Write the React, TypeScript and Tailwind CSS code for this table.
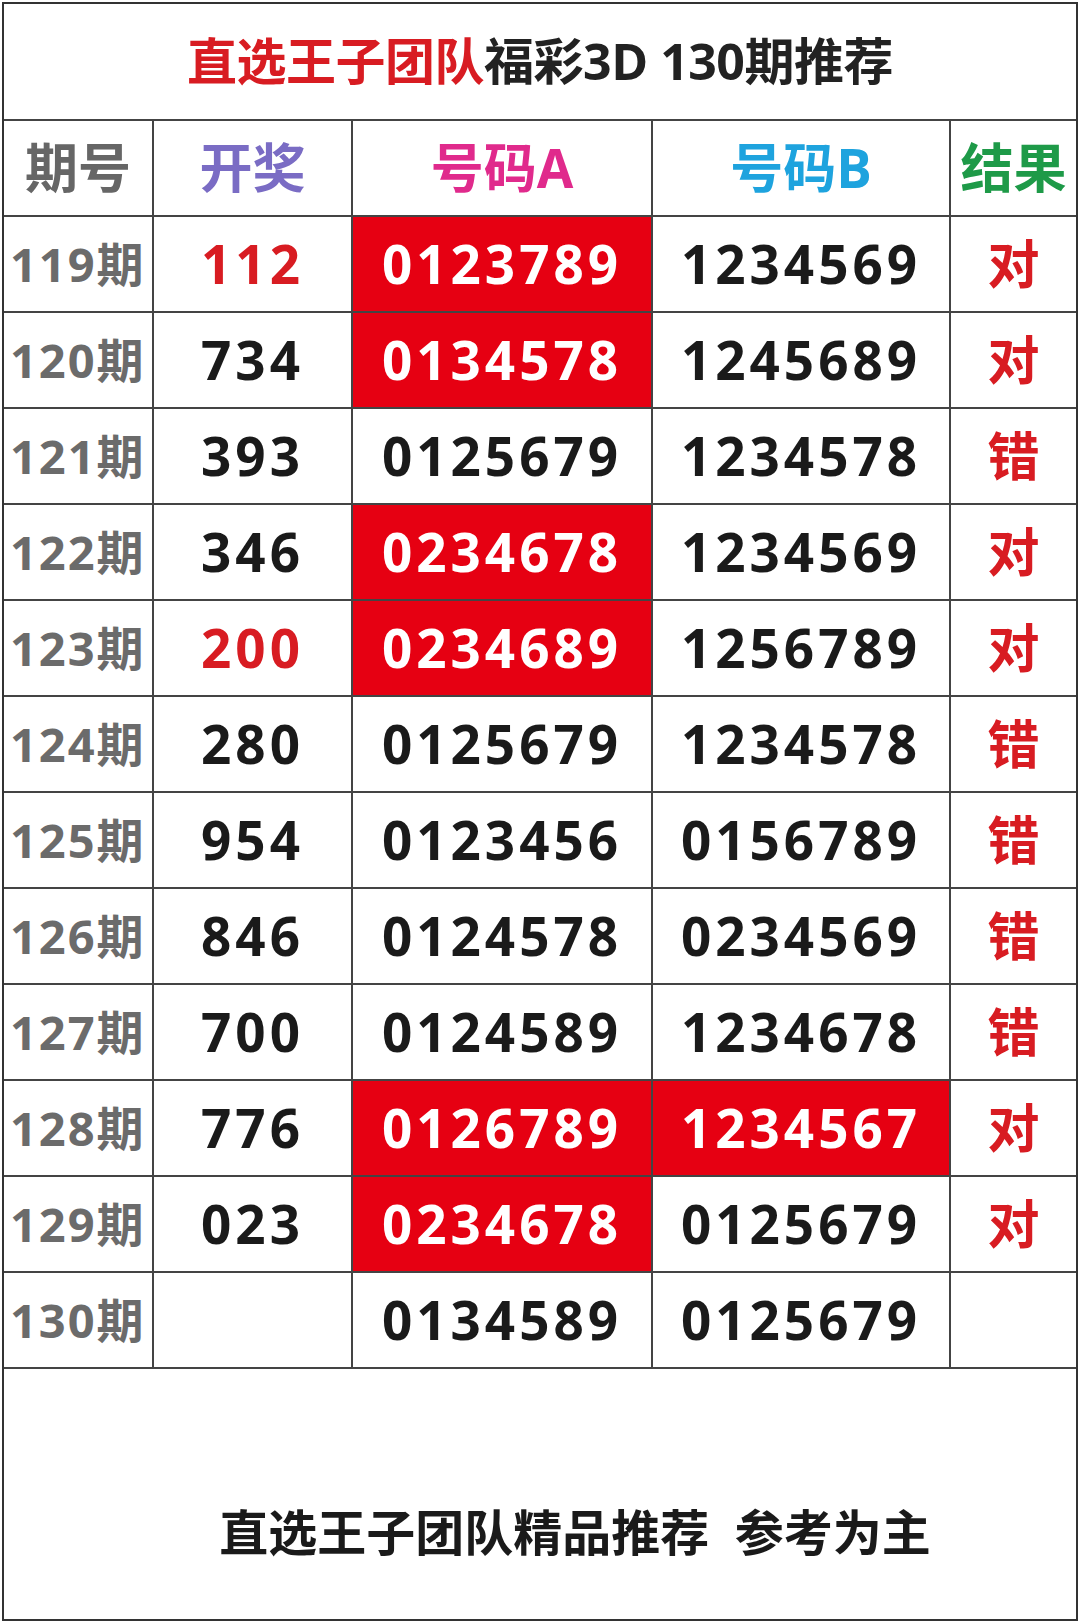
import React from 'react';

type Row = {
  period: string;
  draw: string;
  drawRed?: boolean;
  a: string;
  aHit?: boolean;
  b: string;
  bHit?: boolean;
  result: string;
};

const rows: Row[] = [
  { period: '119期', draw: '112', drawRed: true, a: '0123789', aHit: true, b: '1234569', result: '对' },
  { period: '120期', draw: '734', a: '0134578', aHit: true, b: '1245689', result: '对' },
  { period: '121期', draw: '393', a: '0125679', b: '1234578', result: '错' },
  { period: '122期', draw: '346', a: '0234678', aHit: true, b: '1234569', result: '对' },
  { period: '123期', draw: '200', drawRed: true, a: '0234689', aHit: true, b: '1256789', result: '对' },
  { period: '124期', draw: '280', a: '0125679', b: '1234578', result: '错' },
  { period: '125期', draw: '954', a: '0123456', b: '0156789', result: '错' },
  { period: '126期', draw: '846', a: '0124578', b: '0234569', result: '错' },
  { period: '127期', draw: '700', a: '0124589', b: '1234678', result: '错' },
  { period: '128期', draw: '776', a: '0126789', aHit: true, b: '1234567', bHit: true, result: '对' },
  { period: '129期', draw: '023', a: '0234678', aHit: true, b: '0125679', result: '对' },
  { period: '130期', draw: '', a: '0134589', b: '0125679', result: '' },
];

const font = { fontFamily: '"Open Sans", "Noto Sans CJK SC", sans-serif' };
const grid = 'grid grid-cols-[150px_199px_300px_298px_1fr] h-[96px] border-b-2 border-[#444]';
const cell = 'flex items-center justify-center border-r-2 border-[#444]';
const num = 'text-[53px] font-bold tracking-[4px]';

export default function App() {
  return (
    <div className="w-[1080px] h-[1623px] bg-white p-[2px]" style={font}>
      <div className="h-full border-2 border-[#333] flex flex-col">
        <div className="h-[117px] flex items-center justify-center border-b-2 border-[#444] font-bold text-[50px] tracking-[-0.5px]">
          <span className="text-[#d81c22]">直选王子团队</span>
          <span className="text-[#222]">福彩3D 130期推荐</span>
        </div>

        <div className={grid}>
          <div className={`${cell} text-[#666] text-[53px] font-bold`}>期号</div>
          <div className={`${cell} text-[#7a6cc4] text-[53px] font-bold`}>开奖</div>
          <div className={`${cell} text-[#e02a8c] text-[53px] font-bold`}>号码A</div>
          <div className={`${cell} text-[#1ea3de] text-[53px] font-bold`}>号码B</div>
          <div className="flex items-center justify-center text-[#1e9a48] text-[53px] font-bold">结果</div>
        </div>

        {rows.map((r) => (
          <div key={r.period} className={grid}>
            <div className={`${cell} text-[#6b6b6b] text-[47px] font-bold tracking-[2px] justify-start pl-[6px]`}>
              {r.period}
            </div>
            <div className={`${cell} ${num} ${r.drawRed ? 'text-[#d81c22]' : 'text-[#1a1a1a]'}`}>{r.draw}</div>
            <div className={`${cell} ${num} ${r.aHit ? 'bg-[#e60012] text-white' : 'text-[#1a1a1a]'}`}>{r.a}</div>
            <div className={`${cell} ${num} ${r.bHit ? 'bg-[#e60012] text-white' : 'text-[#1a1a1a]'}`}>{r.b}</div>
            <div className="flex items-center justify-center text-[#d81c22] text-[52px] font-bold">{r.result}</div>
          </div>
        ))}

        <div className="flex-1 flex items-end justify-center pb-[50px] pl-[70px]">
          <span className="text-[#1a1a1a] text-[49px] font-bold whitespace-pre">直选王子团队精品推荐  参考为主</span>
        </div>
      </div>
    </div>
  );
}
